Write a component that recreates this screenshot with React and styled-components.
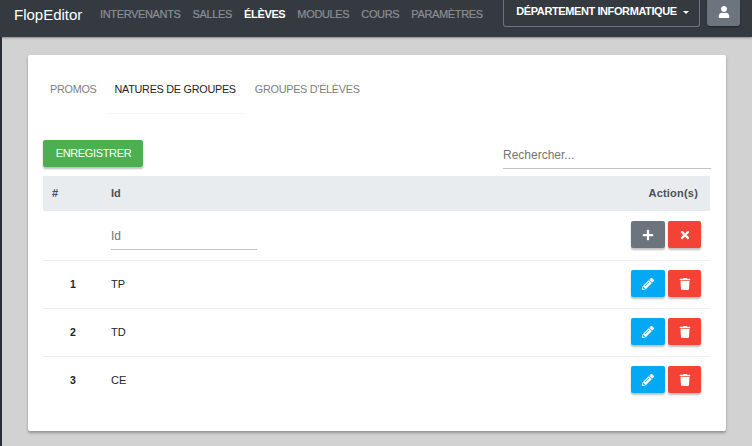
import React from "react";
import styled, { createGlobalStyle } from "styled-components";
import { FaUser, FaPlus, FaTimes, FaPencilAlt, FaTrash } from "react-icons/fa";

const Global = createGlobalStyle`
  html, body { margin: 0; padding: 0; }
  body { width: 752px; height: 446px; overflow: hidden; background: #d2d2d2; font-family: "Liberation Sans", Arial, sans-serif; }
`;
const Page = styled.div`
  width: 752px; height: 446px; display: flex; flex-direction: column; background: #d2d2d2;
`;
const Navbar = styled.header`
  height: 37px; flex: none; display: flex; align-items: flex-start; background: #343a40;
  box-shadow: 0 1px 2px rgba(0,0,0,.35); padding: 0 12px 0 14px; box-sizing: border-box;
`;
const Brand = styled.div`
  color: #fff; font-size: 15px; line-height: 30px; margin-right: 18px; width: 68px; white-space: nowrap;
`;
const NavLinks = styled.nav`
  display: flex; gap: 12px; flex: 1;
`;
const NavLink = styled.span`
  color: ${p => (p.$active ? "#fff" : "#8a8f94")}; font-size: 11px; letter-spacing: -.35px; line-height: 29px; white-space: nowrap;
  font-weight: ${p => (p.$active ? 700 : 400)};
  -webkit-text-stroke: ${p => (p.$active ? "0" : ".2px")};
`;
const Dept = styled.div`
  width: 197px; height: 27px; flex: none; box-sizing: border-box; border: 1px solid #6c757d; border-top: 0; border-radius: 0 0 3px 3px;
  display: flex; align-items: center; justify-content: center; gap: 6px; color: #fff; font-size: 11px; letter-spacing: -.4px; font-weight: 700;
  padding: 0 0 4px 2px; margin-right: 7px; white-space: nowrap;
`;
const Caret = styled.i`
  width: 0; height: 0; border-left: 3.5px solid transparent; border-right: 3.5px solid transparent; border-top: 3.5px solid #fff; margin-top: 2px;
`;
const UserButton = styled.div`
  width: 33px; height: 26px; flex: none; background: #6c757d; border-radius: 0 0 3px 3px; color: #fff; font-size: 12px;
  display: flex; align-items: center; justify-content: center; padding-bottom: 3px; box-sizing: border-box;
  box-shadow: 0 1px 2px rgba(0,0,0,.4);
`;
const Main = styled.main`
  flex: 1; padding: 18px 26px 15px 26px; border-left: 2px solid #2b2e34;
`;
const Card = styled.section`
  height: 376px; box-sizing: border-box; background: #fff; border-radius: 2px; box-shadow: 0 2px 3px rgba(0,0,0,.3);
  padding: 0 15px;
`;
const Tabs = styled.div`
  display: flex; height: 58px; box-sizing: border-box; margin-bottom: 27px;
`;
const Tab = styled.div`
  padding: 27px ${p => (p.$active ? "10px" : "9px")} 0 9px; font-size: 10.8px; letter-spacing: -.25px; line-height: 14px; white-space: nowrap;
  margin-left: ${p => (p.$first ? "-2px" : "0")};
  color: ${p => (p.$active ? "#212529" : "#7b8085")};
  box-shadow: ${p => (p.$active ? "0 1px 0 #f7f7f7" : "none")};
`;
const Toolbar = styled.div`
  display: flex; justify-content: space-between; align-items: flex-start; height: 36px;
`;
const SaveButton = styled.button`
  width: 100px; height: 27px; border: 0; border-radius: 2px; background: #4caf50; color: #fff;
  font: 11px "Liberation Sans", Arial, sans-serif; letter-spacing: -.35px; padding: 0 0 2px 1px; box-shadow: 0 2px 2px rgba(0,0,0,.25);
`;
const Search = styled.div`
  width: 208px; height: 29px; box-sizing: border-box; border-bottom: 1px solid #c4c4c4; color: #757575; font-size: 12px; line-height: 31px;
`;
const Table = styled.div`
  display: flex; flex-direction: column; margin-right: 1px;
`;
const Row = styled.div`
  display: grid; grid-template-columns: 68px 1fr auto; align-items: center; box-sizing: border-box;
  height: ${p => p.$h}px; font-size: 11px; color: #212529; padding-bottom: ${p => (p.$head ? 1 : 2)}px;
  background: ${p => (p.$head ? "#e9ecef" : "#fff")};
  border-top: ${p => (p.$head || p.$first ? "0" : "1px solid #eee")};
  font-weight: ${p => (p.$head ? 700 : 400)};
`;
const Num = styled.div`
  padding-left: ${p => (p.$head ? "9px" : "27px")}; font-weight: 700; font-size: ${p => (p.$head ? "11px" : "10.5px")}; color: ${p => (p.$head ? "#495057" : "#212529")};
`;
const HeadLabel = styled.div`
  color: #495057;
`;
const ActionLabel = styled.div`
  padding-right: 12px; color: #495057; letter-spacing: .2px;
`;
const Actions = styled.div`
  display: flex; gap: 3px; padding-right: 9px;
`;
const IconButton = styled.button`
  width: ${p => (p.$color === "#f44336" ? 33 : 34)}px; height: 27px; padding: 0; border: 0; border-radius: 2px; color: #fff; font-size: 12px;
  background: ${p => p.$color}; box-shadow: 0 2px 2px rgba(0,0,0,.25); display: flex; align-items: center; justify-content: center;
`;
const IdField = styled.div`
  width: 146px; height: 29px; margin-top: 2px; box-sizing: border-box; border-bottom: 1px solid #c4c4c4; color: #757575; font-size: 12px; line-height: 30px;
`;
const RowText = styled.div`
  padding-top: 1px;
`;
const GREY = "#6c757d", RED = "#f44336", BLUE = "#03a9f4";
const rows = [["1", "TP"], ["2", "TD"], ["3", "CE"]];

export default function App() {
  return (
    <Page>
      <Global />
      <Navbar>
        <Brand>FlopEditor</Brand>
        <NavLinks>
          <NavLink>INTERVENANTS</NavLink>
          <NavLink>SALLES</NavLink>
          <NavLink $active>ÉLÈVES</NavLink>
          <NavLink>MODULES</NavLink>
          <NavLink>COURS</NavLink>
          <NavLink>PARAMÈTRES</NavLink>
        </NavLinks>
        <Dept>DÉPARTEMENT INFORMATIQUE <Caret /></Dept>
        <UserButton><FaUser /></UserButton>
      </Navbar>
      <Main>
        <Card>
          <Tabs>
            <Tab $first>PROMOS</Tab>
            <Tab $active>NATURES DE GROUPES</Tab>
            <Tab>GROUPES D'ÉLÈVES</Tab>
          </Tabs>
          <Toolbar>
            <SaveButton>ENREGISTRER</SaveButton>
            <Search>Rechercher...</Search>
          </Toolbar>
          <Table>
            <Row $head $h={35}>
              <Num $head>#</Num>
              <HeadLabel>Id</HeadLabel>
              <ActionLabel>Action(s)</ActionLabel>
            </Row>
            <Row $first $h={49}>
              <Num />
              <IdField>Id</IdField>
              <Actions>
                <IconButton $color={GREY}><FaPlus /></IconButton>
                <IconButton $color={RED}><FaTimes /></IconButton>
              </Actions>
            </Row>
            {rows.map(([n, id]) => (
              <Row key={n} $h={48}>
                <Num>{n}</Num>
                <RowText>{id}</RowText>
                <Actions>
                  <IconButton $color={BLUE}><FaPencilAlt /></IconButton>
                  <IconButton $color={RED}><FaTrash /></IconButton>
                </Actions>
              </Row>
            ))}
          </Table>
        </Card>
      </Main>
    </Page>
  );
}
